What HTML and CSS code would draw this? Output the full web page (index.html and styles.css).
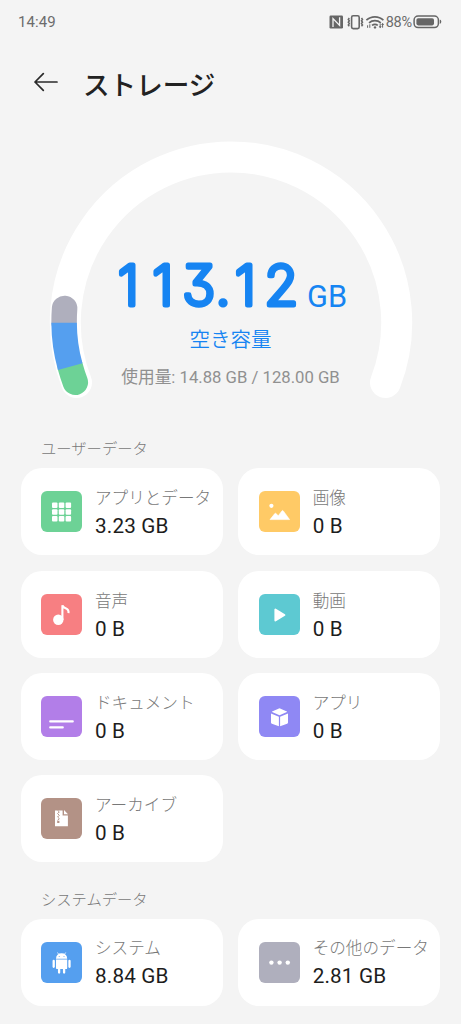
FILE: index.html
```html
<!DOCTYPE html>
<html lang="ja">
<head>
<meta charset="utf-8">
<title>ストレージ</title>
<link rel="stylesheet" href="styles.css">
</head>
<body>
<div class="screen">
  <div class="status">
    <span class="clock">14:49</span>
    <div class="indicators">
      <svg class="sys" width="57" height="16" viewBox="0 0 57 16" fill="none" stroke="#666">
        <rect x=".5" y="1.5" width="13.5" height="13" rx="1.2" fill="#666" stroke="none"/>
        <path d="M4 13V4.6L10.6 11.4V3.2" stroke="#f4f4f4" stroke-width="1.3"/>
        <rect x="22.6" y="1.8" width="7.6" height="12.8" rx="1.6" stroke-width="1.6"/>
        <path d="M20.3 4l-1 1.4 1 1.4-1 1.4 1 1.4-1 1.4 1 1.2M32.5 4l1 1.4-1 1.4 1 1.4-1 1.4 1 1.4-1 1.2" stroke-width="1.5"/>
        <path d="M37.4 6.2c4.8-4.5 12.2-4.5 17 0M40 8.9c3.4-3 8.4-3 11.8 0M43 11.4c1.8-1.4 4-1.4 5.8 0" stroke-width="1.7"/>
        <circle cx="46" cy="13.4" r="1.2" fill="#666" stroke="none"/>
        <path d="M38.6 13.8v-2.5M40.8 13.8v-3.5M51.2 9.5v4.2M53.6 9.5v4.2" stroke-width="1"/>
        <path d="M49.7 12.2h3L51.2 14.2zM52.1 10.9h3L53.6 9z" fill="#666" stroke="none"/>
      </svg>
      <span class="percent">88%</span>
      <svg width="29" height="14" viewBox="0 0 29 14">
        <rect x="1.1" y="1" width="24.3" height="11.6" rx="4" fill="none" stroke="#666" stroke-width="1.5"/>
        <rect x="3.4" y="3.2" width="17.6" height="7.2" rx="1.8" fill="#666"/>
        <path d="M26.8 4.6q1.5.6 1.5 2.2t-1.5 2.2z" fill="#666"/>
      </svg>
    </div>
  </div>

  <header class="titlebar">
    <svg width="24" height="20" viewBox="0 0 24 20" fill="none" stroke="#2a2a2a" stroke-width="1.7" stroke-linecap="round" stroke-linejoin="round"><path d="M23 10H1M9.3 1.7L1 10l8.3 8.3"/></svg>
    <h1>ストレージ</h1>
  </header>

  <section class="gauge">
    <svg class="arc" width="461" height="300" viewBox="0 120 461 300" fill="none">
      <path d="M76.5 382.5A165.7 165.7 0 1 1 385.5 382.5" stroke="#fff" stroke-width="31" stroke-linecap="round"/>
      <path d="M75.3 382.2A166 166 0 0 1 70.3 366.7" stroke="#6dd296" stroke-width="25.5" stroke-linecap="round"/>
      <path d="M64.1 322.7A166 166 0 0 1 64.6 308.4" stroke="#afafbd" stroke-width="25.5" stroke-linecap="round"/>
      <path d="M70.2 366.6A166 166 0 0 1 64.1 322.7" stroke="#559fef" stroke-width="25.5"/>
    </svg>
    <div class="summary">
      <svg class="free" width="240" height="76" viewBox="0 -10 240 76">
        <text class="amount" y="48" x="8 42.4 72.6 105.6 125 154.6">113.12</text>
        <text class="unit" x="197" y="50" textLength="40" lengthAdjust="spacingAndGlyphs">GB</text>
      </svg>
      <div class="free-label">空き容量</div>
      <div class="used">使用量: 14.88 GB / 128.00 GB</div>
    </div>
  </section>

  <h2>ユーザーデータ</h2>
  <div class="cards">
    <div class="card">
      <svg class="icon green" viewBox="0 0 41 41"><g fill="#fff"><rect x="11" y="11.5" width="5.5" height="5.5" rx="1"/><rect x="17.8" y="11.5" width="5.5" height="5.5" rx="1"/><rect x="24.6" y="11.5" width="5.5" height="5.5" rx="1"/><rect x="11" y="18.2" width="5.5" height="5.5" rx="1"/><rect x="17.8" y="18.2" width="5.5" height="5.5" rx="1"/><rect x="24.6" y="18.2" width="5.5" height="5.5" rx="1"/><rect x="11" y="24.9" width="5.5" height="5.5" rx="1"/><rect x="17.8" y="24.9" width="5.5" height="5.5" rx="1"/><rect x="24.6" y="24.9" width="5.5" height="5.5" rx="1"/></g></svg>
      <div class="info"><div class="name">アプリとデータ</div><div class="size">3.23 GB</div></div>
    </div>
    <div class="card">
      <svg class="icon yellow" viewBox="0 0 41 41"><circle cx="12.4" cy="14.8" r="2.1" fill="#fff"/><path d="M11 28.6l4.8-6q.6-.7 1.2 0l2.3 2.2 3.6-4.9q.7-.9 1.4 0l6.3 8.7z" fill="#fff" stroke="#fff" stroke-width=".6" stroke-linejoin="round"/></svg>
      <div class="info"><div class="name">画像</div><div class="size">0 B</div></div>
    </div>
    <div class="card">
      <svg class="icon red" viewBox="0 0 41 41"><circle cx="17.3" cy="25.8" r="5.2" fill="#fff"/><path d="M21.4 26V11.2q.6 2.1 3.2 3 3.4 1.3 2.9 5" fill="none" stroke="#fff" stroke-width="2.1"/></svg>
      <div class="info"><div class="name">音声</div><div class="size">0 B</div></div>
    </div>
    <div class="card">
      <svg class="icon teal" viewBox="0 0 41 41"><path d="M16.4 15.5v11l9-5.5z" fill="#fff" stroke="#fff" stroke-width="2" stroke-linejoin="round"/></svg>
      <div class="info"><div class="name">動画</div><div class="size">0 B</div></div>
    </div>
    <div class="card">
      <svg class="icon purple" viewBox="0 0 41 41"><path d="M9.2 25.4h22.6M9.2 31.4h12.6" stroke="#fff" stroke-width="2.1" stroke-linecap="round"/></svg>
      <div class="info"><div class="name">ドキュメント</div><div class="size">0 B</div></div>
    </div>
    <div class="card">
      <svg class="icon indigo" viewBox="0 0 41 41"><path d="M20.5 12.2l7.4 3.3q.4.3 0 .6l-7.4 3.2-7.4-3.2q-.4-.3 0-.6zM12 17.4l7.9 3.3v9.6l-7-2.6q-.9-.4-.9-1.2zM29 17.4l-7.9 3.3v9.6l7-2.6q.9-.4.9-1.2z" fill="#fff"/></svg>
      <div class="info"><div class="name">アプリ</div><div class="size">0 B</div></div>
    </div>
    <div class="card">
      <svg class="icon brown" viewBox="0 0 41 41"><path d="M14 12.5h7.6v5h5.3v10.8H14z" fill="#fff"/><path d="M23 12l4 4.2h-4z" fill="#fff"/><path d="M16.6 12.3l1.7 1.6-1.7 1.7 1.7 1.7-1.7 1.7 1.7 1.7-1.7 1.5" fill="none" stroke="#b39286" stroke-width="1"/><path d="M16.2 22.7h2.2v2.2h-2.2z" fill="#b39286"/></svg>
      <div class="info"><div class="name">アーカイブ</div><div class="size">0 B</div></div>
    </div>
  </div>

  <h2 class="system">システムデータ</h2>
  <div class="cards">
    <div class="card">
      <svg class="icon blue" viewBox="0 0 41 41"><path d="M17.6 12.2l-1.1-1.7M23.6 12.2l1.1-1.7" fill="none" stroke="#fff" stroke-width=".8"/><path d="M15 16.7q.3-5.5 5.6-5.5t5.6 5.5zM15 17.6h11.2v8.3q0 1.2-1.2 1.2H16.2q-1.2 0-1.2-1.2z" fill="#fff"/><path d="M12.7 19v5.8M28.5 19v5.8M18.1 26.5v4M23.1 26.5v4" stroke="#fff" stroke-width="2.3" stroke-linecap="round"/><circle cx="18.2" cy="14.4" r=".5" fill="#559fef"/><circle cx="23" cy="14.4" r=".5" fill="#559fef"/></svg>
      <div class="info"><div class="name">システム</div><div class="size">8.84 GB</div></div>
    </div>
    <div class="card">
      <svg class="icon gray" viewBox="0 0 41 41"><g fill="#fff"><circle cx="12.4" cy="20.6" r="2.2"/><circle cx="20.6" cy="20.6" r="2.2"/><circle cx="28.8" cy="20.6" r="2.2"/></g></svg>
      <div class="info"><div class="name">その他のデータ</div><div class="size">2.81 GB</div></div>
    </div>
  </div>
</div>
</body>
</html>
```
FILE: styles.css
```css
* { box-sizing: border-box; }
body {
  margin: 0;
  background: #f4f4f4;
  font-family: Roboto, "Noto Sans CJK JP", sans-serif;
}
.screen { width: 461px; height: 1024px; overflow: hidden; }
svg { display: block; flex: none; }
.status {
  height: 44px;
  padding: 0 19px 0 18px;
  display: flex;
  justify-content: space-between;
  align-items: center;
  color: #6c6c6c;
}
.clock { font-size: 15px; letter-spacing: .1px; }
.indicators { display: flex; align-items: center; }
.percent { font-size: 14.5px; letter-spacing: -.2px; margin-right: 1px; }
.titlebar {
  height: 76px;
  padding-left: 34px;
  display: flex;
  align-items: center;
  gap: 25px;
}
h1 {
  margin: 3px 0 0;
  color: #222;
  font: 500 26.6px/36px "Noto Sans CJK JP", sans-serif;
}
.gauge { display: grid; height: 300px; }
.arc, .summary { grid-area: 1 / 1; }
.summary { padding-top: 127px; text-align: center; }
.free { margin-left: 110px; }
.amount {
  font: 200 54.5px Inter, sans-serif;
  font-feature-settings: "cv09", "ss01";
  fill: #1684f2;
  stroke: #1684f2;
  stroke-width: 5px;
  stroke-linejoin: round;
}
.unit { font: 400 31px Roboto, sans-serif; fill: #1684f2; }
.free-label {
  margin-top: 1px;
  color: #1684f2;
  font-size: 20.5px;
  font-weight: 350;
  font-family: "Noto Sans CJK JP", sans-serif;
  line-height: 28px;
}
.used { color: #909090; font-size: 16.7px; font-weight: 400; line-height: 24px; margin-top: 14px; }
h2 {
  margin: 14.8px 0 9.7px 41px;
  color: #787878;
  font: 300 15.3px/24px "Noto Sans CJK JP", sans-serif;
}
h2.system { margin: 23.2px 0 9px 41px; }
.cards {
  padding-left: 20.5px;
  display: grid;
  grid-template-columns: 202px 202px;
  grid-auto-rows: 87px;
  gap: 15.3px 15.7px;
}
.card {
  background: #fff;
  border-radius: 21px;
  padding-left: 20.5px;
  display: flex;
  align-items: center;
  gap: 13px;
}
.icon { width: 41px; height: 41px; border-radius: 6px; }
.info { white-space: nowrap; padding-top: 1.6px; }
.name {
  color: #787878;
  font: 300 16.6px/28px "Noto Sans CJK JP", sans-serif;
}
.size { color: #1d1d1d; font-size: 20.7px; line-height: 31px; letter-spacing: .15px; }
.green { background: #6dd296; }
.yellow { background: #ffca66; }
.red { background: #f77f82; }
.teal { background: #5dc9d2; }
.purple { background: #b27ee8; }
.indigo { background: #8f88f4; }
.brown { background: #b39286; }
.blue { background: #559fef; }
.gray { background: #afafbd; }
```
